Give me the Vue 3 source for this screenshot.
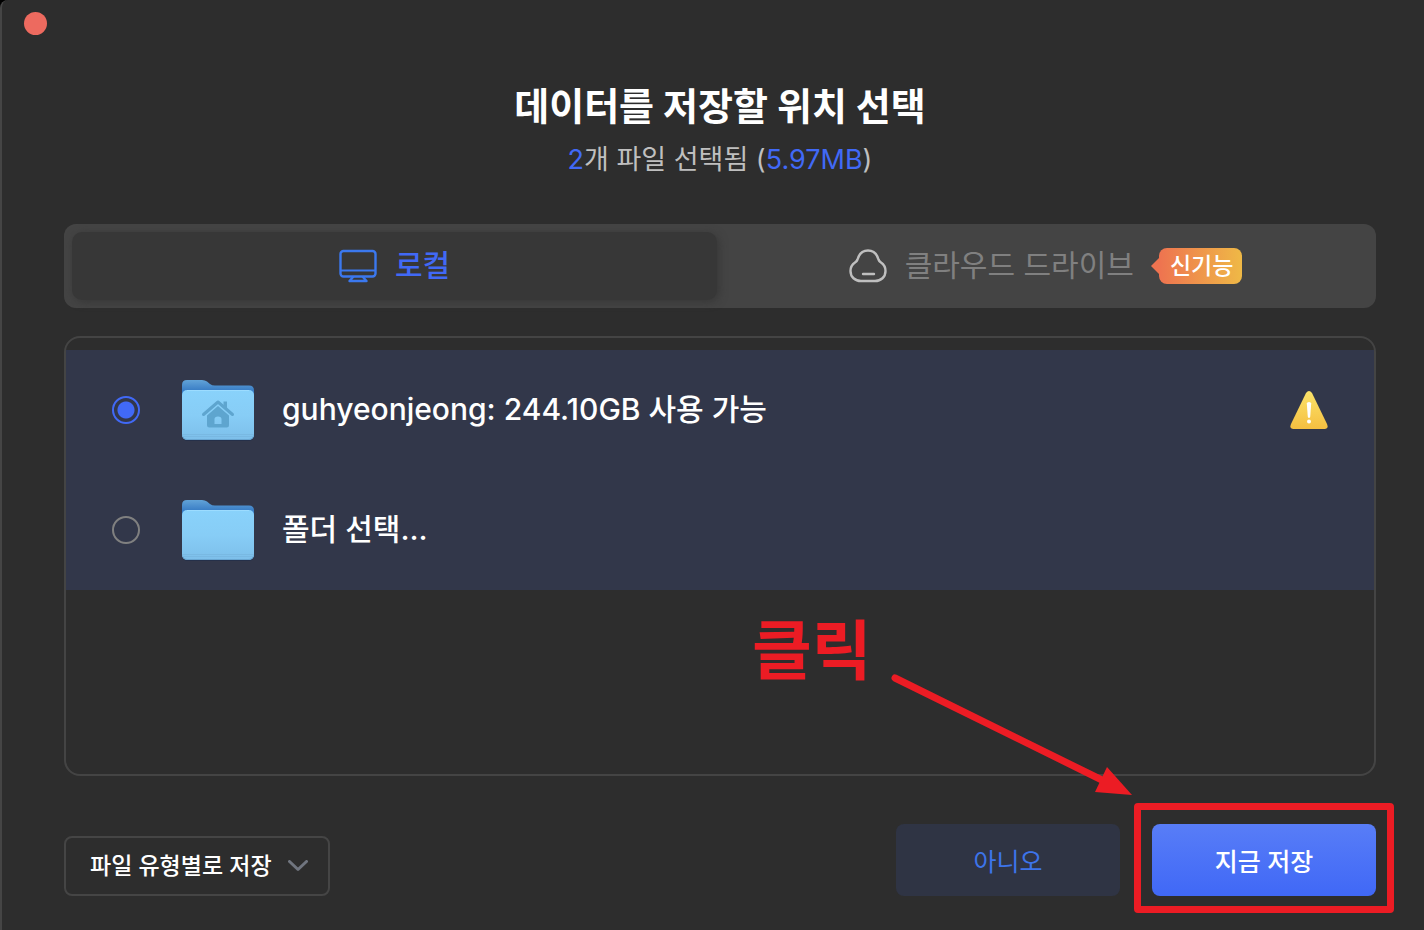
<template>
    <main class="save-dialog">
        <button class="close-button" type="button" aria-label="닫기"></button>

        <header class="dialog-header">
            <h1>데이터를 저장할 위치 선택</h1>
            <p><b>2</b>개 파일 선택됨 (<b>5.97MB</b>)</p>
        </header>

        <div class="tabs" role="tablist">
            <button
                class="tab"
                :class="{ active: tab === 'local' }"
                type="button"
                role="tab"
                :aria-selected="tab === 'local'"
                @click="tab = 'local'"
            >
                <svg class="tab-icon" width="38" height="34" viewBox="0 0 38 34" fill="none">
                    <rect x="1.500" y="2" width="35" height="25.500" rx="3" stroke="currentColor" stroke-width="2.400" />
                    <path d="M2 21.500H36" stroke="currentColor" stroke-width="2.200" />
                    <path d="M14.500 27.500L10.500 32H27.500L23.500 27.500" stroke="currentColor" stroke-width="2.400" stroke-linejoin="round" />
                </svg>
                <span class="tab-label">로컬</span>
            </button>
            <button
                class="tab tab-cloud"
                :class="{ active: tab === 'cloud' }"
                type="button"
                role="tab"
                :aria-selected="tab === 'cloud'"
                @click="tab = 'cloud'"
            >
                <svg class="tab-icon" width="38" height="34" viewBox="0 0 38 34" fill="none">
                    <path
                        d="M12 32C6 32 1.500 28 1.500 22C1.500 18.500 3 15.500 6 13.500C7.500 12.500 8 12 8.500 10.500C10 5 14 1.500 19 1.500C24 1.500 28 5 29.500 10.500C30 12 30.500 12.500 32 13.500C35 15.500 36.500 18.500 36.500 22C36.500 28 32 32 26 32Z"
                        stroke="currentColor"
                        stroke-width="2.400"
                    />
                    <path d="M14 25H25" stroke="currentColor" stroke-width="2.400" stroke-linecap="round" />
                </svg>
                <span class="tab-label">클라우드 드라이브</span>
                <em class="badge">신기능</em>
            </button>
        </div>

        <section class="locations">
            <div class="location-list">
                <label v-for="item in locations" :key="item.id" class="location">
                    <input v-model="selected" type="radio" name="location" :value="item.id" />
                    <svg class="folder" width="76" height="64" viewBox="0 0 76 64">
                        <defs>
                            <linearGradient :id="`back-${item.id}`" x1="0" y1="0" x2="0" y2="1">
                                <stop offset="0" stop-color="#62a3d8" />
                                <stop offset="0.360" stop-color="#3b7fc6" />
                            </linearGradient>
                            <linearGradient :id="`front-${item.id}`" x1="0" y1="0" x2="0" y2="1">
                                <stop offset="0" stop-color="#89d2fb" />
                                <stop offset="0.500" stop-color="#87cdf6" />
                                <stop offset="1" stop-color="#7dbfea" />
                            </linearGradient>
                        </defs>
                        <rect x="2" y="14" width="72" height="49" rx="5" fill="#25304a" />
                        <path
                            d="M2 7Q2 2 7 2H22Q25 2 27 3.500L30 6Q32 7.500 35 7.500H69Q74 7.500 74 12.500V30H2Z"
                            :fill="`url(#back-${item.id})`"
                        />
                        <rect x="2" y="12" width="72" height="50" rx="5" :fill="`url(#front-${item.id})`" />
                        <path d="M7 12.500H69" stroke="#9cdcff" />
                        <path d="M2 56.500H74M2 58.500H74" stroke="#74b2dc" stroke-opacity="0.600" />
                        <path d="M3 59Q4 61.500 7 61.500H69Q72 61.500 73 59" fill="none" stroke="#68a5d0" />
                        <g v-if="item.home" fill="#5ea5cf">
                            <path d="M23.500 36.500L38 24L52.500 36.500" fill="none" stroke="#5ea5cf" stroke-width="3" stroke-linecap="round" stroke-linejoin="round" />
                            <path d="M43.500 23.500H47V32L43.500 29Z" />
                            <path
                                d="M38 28L49 37.500V47Q49 49.500 46.500 49.500H29.500Q27 49.500 27 47V37.500ZM34.500 46H41.500V41Q41.500 38.500 38 38.500Q34.500 38.500 34.500 41Z"
                                fill-rule="evenodd"
                            />
                        </g>
                    </svg>
                    <span class="location-name">{{ item.name }}</span>
                    <svg v-if="item.warning" class="warning" width="38" height="40" viewBox="0 0 38 40">
                        <defs>
                            <linearGradient id="warning-fill" x1="0" y1="0" x2="0" y2="1">
                                <stop offset="0" stop-color="#fbe36a" />
                                <stop offset="1" stop-color="#f5bf41" />
                            </linearGradient>
                        </defs>
                        <path
                            d="M16 3Q19 -1 22 3L37 34Q39 39 34.500 39H3.500Q-1 39 1 34Z"
                            fill="url(#warning-fill)"
                        />
                        <path d="M16.800 13.500Q16.800 12 19 12Q21.200 12 21.200 13.500L20.200 27Q19 29 17.800 27Z" fill="#fff" />
                        <circle cx="19" cy="31.500" r="2" fill="#fff" />
                    </svg>
                </label>
            </div>
        </section>

        <footer class="dialog-footer">
            <div class="sort-field">
                <select v-model="sorting" aria-label="저장 방식">
                    <option value="type">파일 유형별로 저장</option>
                </select>
                <svg class="chevron" width="20" height="12" viewBox="0 0 20 12" fill="none">
                    <path d="M1.500 1.500L10 9.500L18.500 1.500" stroke="#70757f" stroke-width="3" stroke-linecap="round" stroke-linejoin="round" />
                </svg>
            </div>
            <div class="actions">
                <button class="action secondary" type="button">아니오</button>
                <div class="save-wrap">
                    <button class="action primary" type="button">지금 저장</button>
                    <span class="highlight"></span>
                    <svg class="pointer" width="400" height="200" viewBox="0 0 400 200">
                        <text x="8" y="64">클릭</text>
                        <path d="M151 68L362 172" fill="none" stroke="#ec1c24" stroke-width="7" stroke-linecap="round" />
                        <path d="M363 157L388 185L351 182Z" fill="#ec1c24" />
                    </svg>
                </div>
            </div>
        </footer>
    </main>
</template>

<script setup>
import { ref } from 'vue';

const tab = ref('local');
const selected = ref('home');
const sorting = ref('type');

const locations = [
    { id: 'home', name: 'guhyeonjeong: 244.10GB 사용 가능', home: true, warning: true },
    { id: 'custom', name: '폴더 선택...', home: false, warning: false },
];
</script>

<style>
body {
    margin: 0;
    background: #000000;
}
</style>

<style scoped>
.save-dialog {
    position: relative;
    display: flex;
    flex-direction: column;
    box-sizing: border-box;
    min-height: 100vh;
    padding: 78px 48px 34px 62px;
    border-left: 2px solid #454545;
    border-top-left-radius: 8px;
    background: #2d2d2d;
    color: #ffffff;
    font-family: Inter, "Noto Sans CJK KR", sans-serif;
    overflow: hidden;
}
button,
select {
    margin: 0;
    border: none;
    font-family: inherit;
    cursor: pointer;
}
.close-button {
    position: absolute;
    top: 12px;
    left: 22px;
    width: 23px;
    height: 23px;
    padding: 0;
    border-radius: 50%;
    background: #ed6a5f;
}
.dialog-header { text-align: center; }
h1 {
    margin: 0;
    font-size: 38px;
    font-weight: 700;
    line-height: 56px;
}
.dialog-header p {
    margin: 6px 0 0;
    color: #bfbfbf;
    font-size: 27px;
    line-height: 40px;
}
.dialog-header b {
    color: #4169f6;
    font-weight: 400;
}
.tabs {
    display: flex;
    margin-top: 44px;
    padding: 8px;
    border-radius: 12px;
    background: #444444;
}
.tab {
    display: flex;
    flex: 1;
    align-items: center;
    justify-content: center;
    box-sizing: border-box;
    height: 68px;
    padding: 0;
    border-radius: 10px;
    background: transparent;
    color: #808080;
    font-size: 30px;
}
.tab.active {
    background: #373737;
    box-shadow: 2px 2px 8px #373737;
    color: #4169f6;
}
.tab.active .tab-label { font-weight: 500; }
.tab-cloud { padding-left: 6px; }
.tab-icon {
    margin-right: 18px;
    color: #bfbfbf;
}
.tab.active .tab-icon { color: #3b78ee; }
.tab-label,
.location-name {
    padding-bottom: 6px;
}
.badge {
    position: relative;
    margin-left: 25px;
    padding: 0 9px 0 11px;
    border-radius: 8px;
    background: linear-gradient(90deg, #ee7350, #efb946);
    color: #ffffff;
    font-size: 23px;
    font-style: normal;
    font-weight: 500;
    line-height: 36px;
}
.badge::before {
    content: "";
    position: absolute;
    top: 10px;
    left: -8px;
    border: 8px solid transparent;
    border-right-color: #ee7350;
    border-left: none;
}
.locations {
    flex: 1;
    margin-top: 28px;
    padding: 12px 0;
    border: 2px solid #444444;
    border-radius: 16px;
}
.location-list { background: #32374a; }
.location {
    display: flex;
    align-items: center;
    height: 120px;
    padding: 0 46px;
    cursor: pointer;
}
.location input {
    box-sizing: border-box;
    width: 28px;
    height: 28px;
    margin: 0;
    border: 2px solid #808080;
    border-radius: 50%;
    appearance: none;
}
.location input:checked {
    border-color: #4169f6;
    background: radial-gradient(circle, #4169f6 8px, transparent 9px);
}
.folder { margin: 0 26px 0 40px; }
.location-name {
    font-size: 30px;
    font-weight: 500;
}
.warning { margin-left: auto; }
.dialog-footer {
    display: flex;
    align-items: flex-end;
    justify-content: space-between;
    margin-top: 48px;
}
.sort-field { position: relative; }
.sort-field select {
    height: 60px;
    padding: 0 56px 0 24px;
    border: 2px solid #454545;
    border-radius: 8px;
    background: transparent;
    color: #ffffff;
    font-size: 23px;
    font-weight: 500;
    appearance: none;
}
.chevron {
    position: absolute;
    top: 24px;
    right: 22px;
    pointer-events: none;
}
.actions {
    display: flex;
    gap: 32px;
}
.action {
    width: 224px;
    height: 72px;
    padding: 0;
    border-radius: 8px;
    font-size: 25px;
}
.secondary {
    background: #2f3444;
    color: #3d74ea;
}
.primary {
    background: linear-gradient(#587df7, #4068f6);
    color: #ffffff;
    font-weight: 500;
}
.save-wrap { position: relative; }
.highlight {
    position: absolute;
    inset: -21px -18px -17px;
    border: 7px solid #ec1c24;
    border-radius: 4px;
    pointer-events: none;
}
.pointer {
    position: absolute;
    right: 232px;
    bottom: 86px;
    pointer-events: none;
}
.pointer text {
    fill: #ec1c24;
    font-size: 65px;
    font-weight: 700;
}
</style>
